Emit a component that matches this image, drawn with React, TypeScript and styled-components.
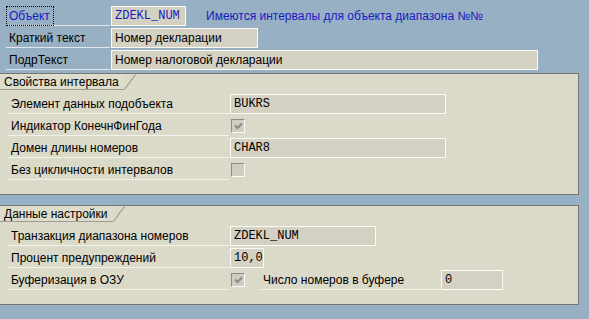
import React from 'react'
import styled, { createGlobalStyle } from 'styled-components'

const GlobalStyle = createGlobalStyle`
  html, body {
    margin: 0;
    padding: 0;
    background: #97b0c3;
  }
  body {
    font-family: "Liberation Sans", Arial, sans-serif;
    font-size: 12px;
    color: #000;
  }
`;

const Screen = styled.div`
  width: 589px;
  height: 319px;
  overflow: hidden;
  background: #97b0c3;
  padding-top: 6px;
  box-sizing: border-box;
`;

const Header = styled.div`
  display: flex;
  flex-direction: column;
  gap: 2px;
  padding-left: 6px;
`;

const Row = styled.div<{ $indent?: number }>`
  display: flex;
  align-items: center;
  height: 20px;
  padding-left: ${p => p.$indent ?? 0}px;
`;

const Label = styled.div<{ $width: number; $tone?: 'blue' | 'beige' }>`
  box-sizing: border-box;
  width: ${p => p.$width}px;
  height: 20px;
  margin-right: 1px;
  padding-left: 3px;
  display: flex;
  align-items: center;
  white-space: nowrap;
  border-bottom: 1px solid ${p => (p.$tone === 'blue' ? '#dfe8ee' : '#f3f2ea')};
`;

// dotted focus frame round the first label
const FocusText = styled.span`
  box-sizing: border-box;
  height: 20px;
  margin-left: -3px;
  padding: 0 3px 0 2px;
  display: flex;
  align-items: center;
  color: #1a1ac4;
  border: 1px dotted #000;
`;

const Field = styled.div<{ $width: number; $mono?: boolean; $blue?: boolean }>`
  box-sizing: border-box;
  width: ${p => p.$width}px;
  height: 20px;
  background: #d4d1c2;
  border: 1px solid #fbfbf6;
  padding-left: 3px;
  display: flex;
  align-items: center;
  white-space: nowrap;
  overflow: hidden;
  font-family: ${p => (p.$mono ? '"Liberation Mono", "Courier New", monospace' : 'inherit')};
  font-size: 12px;
  color: ${p => (p.$blue ? '#1a1ac4' : '#000')};
`;

const Message = styled.span`
  margin-left: 20px;
  color: #1a1ac4;
  white-space: nowrap;
`;

const Panel = styled.section<{ $mt: number }>`
  margin-top: ${p => p.$mt}px;
  width: 579px;
  box-sizing: border-box;
  background: #dbd9c8;
  border: 1px solid #737876;
  border-left: none;
  padding-bottom: 14px;
`;

const TabBar = styled.div`
  display: flex;
  align-items: flex-end;
  height: 16px;
`;

const Tab = styled.div`
  height: 16px;
  box-sizing: border-box;
  padding-left: 4px;
  padding-right: 5px;
  display: flex;
  align-items: center;
  white-space: nowrap;
  border-bottom: 1px solid #9c9c94;
  background: #dedcca;
`;

const TabSlash = styled.svg`
  display: block;
  width: 12px;
  height: 16px;
`;

const Rows = styled.div`
  display: flex;
  flex-direction: column;
  gap: 2px;
  padding-top: 4px;
`;

const Box = styled.span<{ $after?: number }>`
  box-sizing: border-box;
  width: 14px;
  height: 14px;
  margin-left: 1px;
  margin-right: ${p => p.$after ?? 0}px;
  background: #cfcdbf;
  border: 1px solid #fbfbf6;
  border-top-color: #8d8d86;
  border-left-color: #8d8d86;
  display: flex;
  align-items: center;
  justify-content: center;
`;

const Check = ({ checked, after }: { checked?: boolean; after?: number }) => (
  <Box $after={after}>
    {checked && (
      <svg width="9" height="8" viewBox="0 0 9 8">
        <polyline points="1,3.5 3.5,6 8,1.5" fill="none" stroke="#8a8a82" strokeWidth="2" />
      </svg>
    )}
  </Box>
);

const PanelTab = ({ title }: { title: string }) => (
  <TabBar>
    <Tab>{title}</Tab>
    <TabSlash viewBox="0 0 12 16">
      <line x1="0.5" y1="15.5" x2="11.5" y2="0.5" stroke="#8a8a84" strokeWidth="1" />
    </TabSlash>
  </TabBar>
);

export default function App() {
  return (
    <>
      <GlobalStyle />
      <Screen>
        <Header>
          <Row>
            <Label $width={104} $tone="blue">
              <FocusText>Объект</FocusText>
            </Label>
            <Field $width={75} $mono $blue>ZDEKL_NUM</Field>
            <Message>Имеются интервалы для объекта диапазона №№</Message>
          </Row>
          <Row>
            <Label $width={104} $tone="blue">Краткий текст</Label>
            <Field $width={147}>Номер декларации</Field>
          </Row>
          <Row>
            <Label $width={104} $tone="blue">ПодрТекст</Label>
            <Field $width={427}>Номер налоговой декларации</Field>
          </Row>
        </Header>

        <Panel $mt={3}>
          <PanelTab title="Свойства интервала" />
          <Rows>
            <Row $indent={8}>
              <Label $width={221}>Элемент данных подобъекта</Label>
              <Field $width={216} $mono>BUKRS</Field>
            </Row>
            <Row $indent={8}>
              <Label $width={221}>Индикатор КонечнФинГода</Label>
              <Check checked />
            </Row>
            <Row $indent={8}>
              <Label $width={221}>Домен длины номеров</Label>
              <Field $width={216} $mono>CHAR8</Field>
            </Row>
            <Row $indent={8}>
              <Label $width={221}>Без цикличности интервалов</Label>
              <Check />
            </Row>
          </Rows>
        </Panel>

        <Panel $mt={10}>
          <PanelTab title="Данные настройки" />
          <Rows>
            <Row $indent={8}>
              <Label $width={221}>Транзакция диапазона номеров</Label>
              <Field $width={146} $mono>ZDEKL_NUM</Field>
            </Row>
            <Row $indent={8}>
              <Label $width={221}>Процент предупреждений</Label>
              <Field $width={34} $mono>10,0</Field>
            </Row>
            <Row $indent={8}>
              <Label $width={221}>Буферизация в ОЗУ</Label>
              <Check checked after={15} />
              <Label $width={180}>Число номеров в буфере</Label>
              <Field $width={62} $mono>0</Field>
            </Row>
          </Rows>
        </Panel>
      </Screen>
    </>
  )
}
